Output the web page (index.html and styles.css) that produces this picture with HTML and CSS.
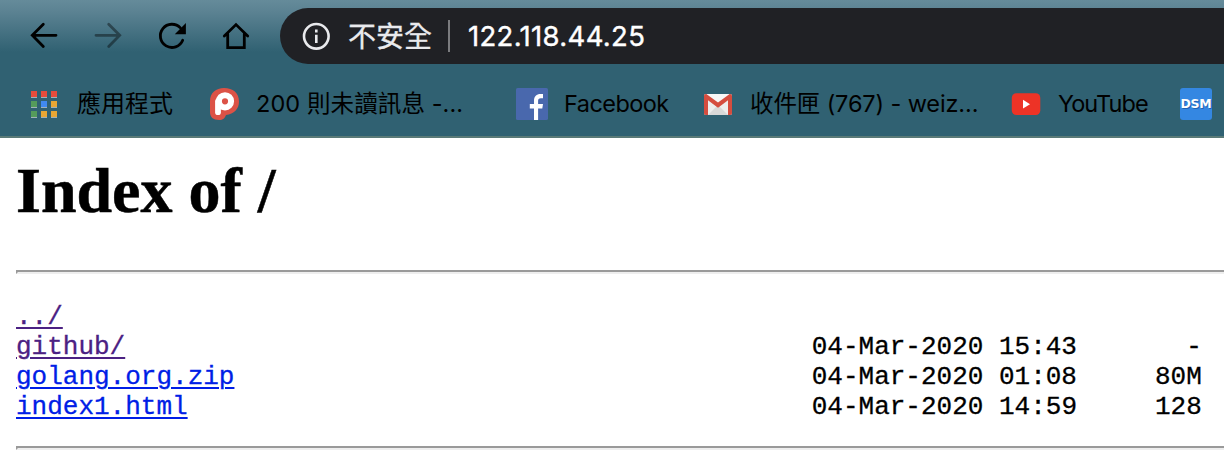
FILE: index.html
```html
<!DOCTYPE html>
<html lang="zh-Hant">
<head>
<meta charset="utf-8">
<title>Index of /</title>
<link rel="stylesheet" href="styles.css">
</head>
<body>
<header class="chrome">
  <nav class="toolbar">
    <svg class="nav-icon" viewBox="0 0 32 32"><path d="M28 15.3H4.5M15.3 4.3 4.3 15.3l11 11.2"/></svg>
    <svg class="nav-icon nav-icon-disabled" viewBox="0 0 32 32"><path d="M4 15.3h23.5M16.7 4.3l11 11-11 11.2"/></svg>
    <svg class="nav-icon" viewBox="0 0 32 32"><path d="M26.7 20.2A11.6 11.6 0 1 1 24.4 7.9"/><path class="solid" d="M29.9 3v11.2H18.8z"/></svg>
    <svg class="nav-icon" viewBox="0 0 32 32"><path d="M4.3 16 16 4.6 27.7 16M7.7 14v13.6h16.6V14"/></svg>
    <div class="omnibox">
      <svg class="info" viewBox="0 0 28 28"><circle cx="14.3" cy="14.3" r="12.3"/><path d="M14.3 12.7V21M14.3 7.5v3"/></svg>
      <span class="security">不安全</span>
      <span class="divider"></span>
      <span class="address">122.118.44.25</span>
    </div>
  </nav>
  <nav class="bookmarks">
    <div class="bookmark apps">
      <svg class="apps-icon" viewBox="0 0 26 27">
        <path fill="#9fb2b8" d="M0 6h6v1H0zM10 6h6v1h-6zM20 6h6v1h-6zM0 16h6v1H0zM10 16h6v1h-6zM20 16h6v1h-6zM0 26h6v1H0zM10 26h6v1h-6zM20 26h6v1h-6z"/>
        <path fill="#e74c3c" d="M0 0h6v6H0zM10 0h6v6h-6zM20 0h6v6h-6z"/>
        <path fill="#559b5b" d="M0 10h6v6H0zM0 20h6v6H0z"/>
        <path fill="#418af0" d="M10 10h6v6h-6z"/>
        <path fill="#e8a634" d="M20 10h6v6h-6zM10 20h6v6h-6zM20 20h6v6h-6z"/>
      </svg>
      <span>應用程式</span>
    </div>
    <div class="bookmark plurk">
      <svg class="favicon" viewBox="0 0 32 32">
        <path fill="#dc5246" d="M2 13C2 5 8 0 16 0c9 0 15 5 15 13.5C31 21 26 26 18 27c-1 3-3 5-7 5-6 0-9-3-9-8z"/>
        <circle cx="17" cy="13.3" r="6.1" fill="none" stroke="#fff" stroke-width="6"/>
        <path fill="none" stroke="#fff" stroke-width="5.8" stroke-linecap="round" d="M10 24.2V13.5"/>
      </svg>
      <span>200 則未讀訊息 -...</span>
    </div>
    <div class="bookmark facebook">
      <svg class="favicon" viewBox="0 0 32 32">
        <rect width="32" height="32" rx="1.6" fill="#4968ad"/>
        <path fill="#fff" d="M18 32V20.4h-4.2V16H18v-3.3C18 8.4 20.6 6 24.5 6H27v4.2h-2.2c-2 0-2.7.9-2.7 2.5V16H27l-.7 4.4h-4.2V32z"/>
      </svg>
      <span>Facebook</span>
    </div>
    <div class="bookmark gmail">
      <svg class="favicon" viewBox="0 0 32 32">
        <rect x="2" y="6" width="28" height="21" rx="1.8" fill="#ededed"/>
        <path fill="#d8d8d8" d="m6 27 10-10 10 10z"/>
        <path fill="#f7f7f7" d="M4 6h24L16 15z"/>
        <path fill="#d54d3f" d="M2 8c0-1.5 1.5-2.5 3-1.6L16 14.5l11-8.1c1.5-.9 3 .1 3 1.6v17.3c0 1-.8 1.7-1.7 1.7H26V12.2l-10 7.5-10-7.5V27H3.7c-.9 0-1.7-.7-1.7-1.7z"/>
      </svg>
      <span>收件匣 (767) - weiz...</span>
    </div>
    <div class="bookmark youtube">
      <svg class="favicon" viewBox="0 0 32 32">
        <rect x="1.8" y="5.3" width="28.5" height="21.7" rx="4.5" fill="#ed3326"/>
        <path fill="#fff" d="M13 11.8v8.8l7-4.4z"/>
      </svg>
      <span>YouTube</span>
    </div>
    <div class="bookmark">
      <span class="dsm">DSM</span>
    </div>
  </nav>
</header>
<main class="listing">
<h1 class="heading">Index of /</h1>
<hr class="rule">
<pre class="files"><a class="visited" href="#">../</a>
<a class="visited" href="#">github/</a>                                            04-Mar-2020 15:43       -
<a href="#">golang.org.zip</a>                                     04-Mar-2020 01:08     80M
<a href="#">index1.html</a>                                        04-Mar-2020 14:59     128
</pre>
<hr class="rule">
</main>
</body>
</html>
```
FILE: styles.css
```css
* { box-sizing: border-box; }

body {
  margin: 0;
  height: 458px;
  overflow: hidden;
  background: #fff;
  color: #000;
}

.chrome {
  height: 138px;
  border-bottom: 2px solid #5a7a77;
  background: linear-gradient(#658b9a 0, #5b8292 12px, #306172 52px);
  font-family: Inter, "Noto Sans CJK TC", sans-serif;
}

.toolbar {
  display: flex;
  align-items: center;
  gap: 32px;
  height: 64px;
  padding: 8px 0 0 28px;
}

.nav-icon {
  flex: none;
  width: 32px;
  height: 32px;
  fill: none;
  stroke: #000;
  stroke-width: 2.8;
  stroke-linecap: round;
}

.nav-icon-disabled { opacity: 0.4; }

.solid { fill: #000; stroke: none; }

.omnibox {
  display: flex;
  align-items: center;
  flex: 1;
  height: 56px;
  margin-left: -4px;
  padding-left: 22px;
  border-radius: 28px 0 0 28px;
  background: #202125;
  white-space: nowrap;
}

.info {
  width: 28px;
  height: 28px;
  overflow: visible;
  fill: none;
  stroke: #e9eaed;
  stroke-width: 2.6;
}

.security {
  width: 84px;
  margin-left: 18px;
  padding-bottom: 2px;
  color: #e9eaed;
  font: 28px/40px "Noto Sans CJK TC", sans-serif;
  -webkit-text-stroke: 0.3px;
}

.divider {
  width: 2px;
  height: 32px;
  margin-left: 16px;
  background: #7b7c7f;
}

.address {
  margin-left: 18px;
  color: #fff;
  font-size: 27.5px;
  letter-spacing: 0.33px;
  -webkit-text-stroke: 0.4px;
}

.bookmarks {
  display: flex;
  align-items: center;
  height: 72px;
  padding: 8px 0 0 31px;
  white-space: nowrap;
}

.bookmark {
  display: flex;
  flex: none;
  align-items: center;
  gap: 16px;
  height: 36px;
  font-size: 23.5px;
  line-height: 36px;
}

.apps { width: 177px; gap: 20px; font-size: 24px; }
.plurk { width: 308px; letter-spacing: 0.1px; }
.facebook { width: 186px; letter-spacing: -0.55px; }
.gmail { width: 308px; letter-spacing: -0.12px; }
.youtube { width: 170px; letter-spacing: -0.95px; }

.apps-icon { width: 26px; height: 27px; }
.favicon { flex: none; width: 32px; height: 32px; }

.dsm {
  width: 32px;
  height: 32px;
  border-radius: 3px;
  background: #3487e2;
  color: #fff;
  font: bold 12.5px/31px "DejaVu Sans", sans-serif;
  letter-spacing: -0.3px;
  text-align: center;
  text-shadow: 1px 1px #2362b0;
}

.listing { padding: 16px 0 0 16px; }

.heading {
  margin: 0 0 42px;
  font: bold 64px/74px "Liberation Serif", serif;
  -webkit-text-stroke: 0.5px;
}

.rule {
  height: 4px;
  margin: 0 -4px 0 0;
  border: 2px solid;
  border-color: #9a9a9a #eee #eee #9a9a9a;
}

.files {
  margin: 28px 0 24px;
  font: 26px/30px "Liberation Mono", monospace;
  -webkit-text-stroke: 0.3px;
}

.files a {
  color: #001ee6;
  text-decoration-thickness: 2px;
  text-underline-offset: 3px;
}

.files .visited { color: #4b2183; }
```
